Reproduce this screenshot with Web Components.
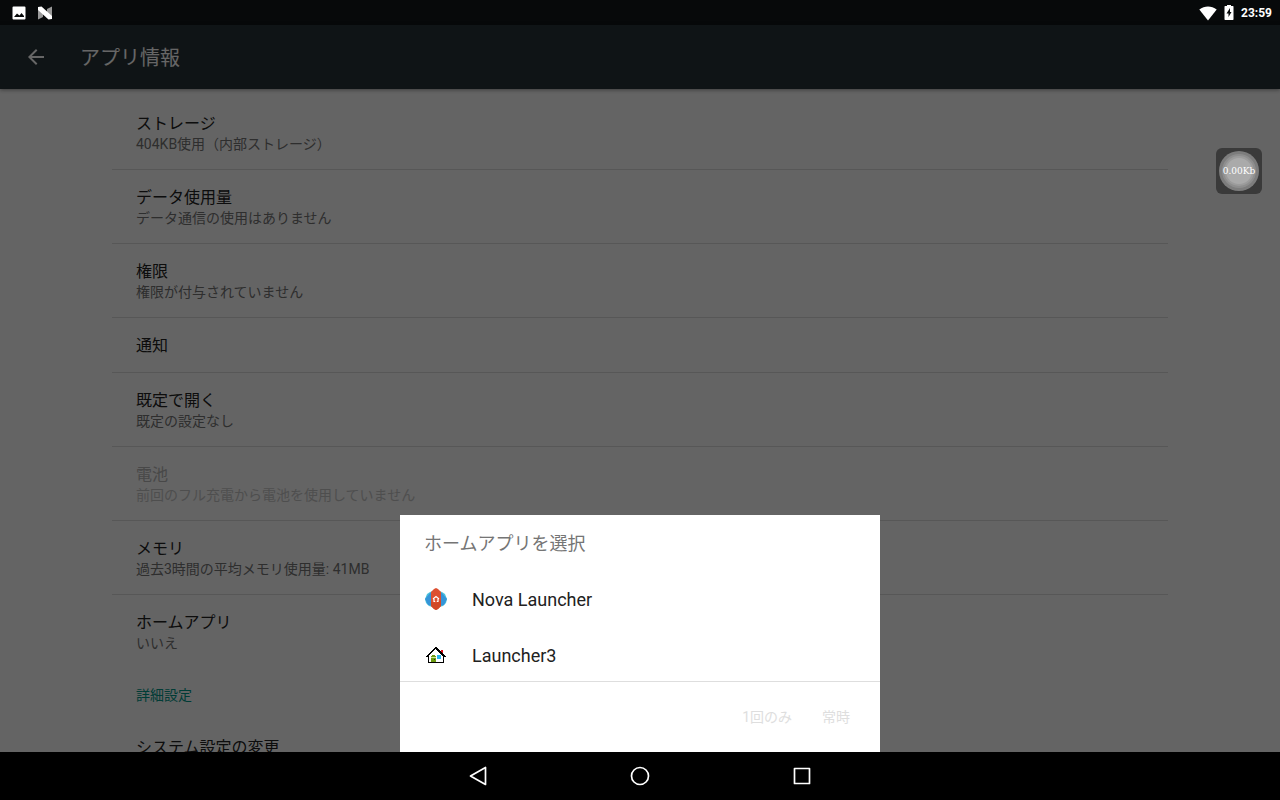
<!DOCTYPE html>
<html lang="ja">
<head>
<meta charset="utf-8">
<meta name="viewport" content="width=device-width, initial-scale=1">
<title>アプリ情報</title>
<style>
   html, body { height: 100%; margin: 0; background: #000; }
   body { font-family: Roboto, "Noto Sans CJK JP", sans-serif; }
</style>
</head>
<body>

<device-screen>
   <status-bar slot="status" time="23:59"></status-bar>

   <app-bar>アプリ情報</app-bar>
   <settings-list>
      <setting-row>ストレージ<span slot="summary">404KB使用（内部ストレージ）</span></setting-row>
      <setting-row>データ使用量<span slot="summary">データ通信の使用はありません</span></setting-row>
      <setting-row>権限<span slot="summary">権限が付与されていません</span></setting-row>
      <setting-row>通知</setting-row>
      <setting-row>既定で開く<span slot="summary">既定の設定なし</span></setting-row>
      <setting-row disabled>電池<span slot="summary">前回のフル充電から電池を使用していません</span></setting-row>
      <setting-row>メモリ<span slot="summary">過去3時間の平均メモリ使用量: 41MB</span></setting-row>
      <setting-row last>ホームアプリ<span slot="summary">いいえ</span></setting-row>
      <setting-category>詳細設定</setting-category>
      <setting-row>システム設定の変更</setting-row>
   </settings-list>

   <chooser-sheet slot="sheet">
      <span slot="title">ホームアプリを選択</span>
      <app-choice>
         <svg slot="icon" width="24" height="24" viewBox="0 0 24 24" aria-hidden="true">
            <path d="M1 11 3 6 6 4 9 3V19L5 18 2 15Z" fill="#4cc3dc"/>
            <path d="M23 11 21 6 18 4 15 3V19L19 18 22 15Z" fill="#4cc3dc"/>
            <path d="M1 11 6 5 9 4V18L4 17Z" fill="#3595d8"/>
            <path d="M23 11 18 5 15 4V18L20 17Z" fill="#3595d8"/>
            <path d="M12 0 14 1 17 4V18L14 21 12 22 10 21 7 18V4L10 1Z" fill="#dd4f30"/>
            <path d="M7 14 12 15 17 12V18L14 21 12 22 10 21 7 18Z" fill="#d14727"/>
            <path d="M9 11 12 8.500 15 11M10 11V13.500H11.200M14 11V13.500H12.800" fill="none" stroke="#fff" stroke-width="1.200"/>
         </svg>
         Nova Launcher
      </app-choice>
      <app-choice>
         <svg slot="icon" width="24" height="24" viewBox="0 0 24 24" shape-rendering="crispEdges" aria-hidden="true">
            <path d="M17 6H19V10L17 8Z" fill="#e00d16"/>
            <path d="M12 5 4 13V19H20V13Z" fill="#fff"/>
            <path d="M2 12H3V11H4V10H5V9H6V8H7V7H8V6H9V5H10V4H11V3H13V4H14V5H15V6H16V7H17V8H18V9H19V10H20V11H21V12H22V13H20V19H4V13H2ZM5 12V18H19V12H18V11H17V10H16V9H15V8H14V7H13V6H12V5H11V6H10V7H9V8H8V9H7V10H6V11H5Z" fill="#000" fill-rule="evenodd"/>
            <path d="M7 12H8V11H11V12H12V18H7Z" fill="#6d9c12"/>
            <path d="M7 13H12V14H7Z" fill="#d3e69d"/>
            <path d="M10 15H11V16H10Z" fill="#27430a"/>
            <path d="M13 11H17V15H13Z" fill="#28b6ee"/>
         </svg>
         Launcher3
      </app-choice>
      <sheet-button slot="actions">1回のみ</sheet-button>
      <sheet-button slot="actions">常時</sheet-button>
   </chooser-sheet>

   <speed-bubble slot="float">0.00Kb</speed-bubble>
   <nav-bar slot="nav"></nav-bar>
</device-screen>

<script>
// registers an element whose shadow root is filled from a markup function
function define( selector, render ) {
   customElements.define( selector, class extends HTMLElement {
      constructor() { super();
         const templateEl = document.createElement( 'template' );
         templateEl.innerHTML = render( this );
         this.attachShadow( { mode: 'open' } ).appendChild( templateEl.content.cloneNode( true ) );
      }
   });
}

// status on top, navigation at the bottom, the app and its dimming layer between
define( 'device-screen', () => `
   <style>
      :host { display: flex; flex-direction: column; height: 100vh; position: relative; overflow: hidden; }
      main { flex: 1; min-height: 0; position: relative; display: flex; flex-direction: column; background: #fafafa; }
      .scrim { position: absolute; inset: 0; background: rgba( 0, 0, 0, .6 ); display: flex; align-items: flex-end; justify-content: center; }
   </style>
   <slot name="status"></slot>
   <main>
      <slot></slot>
      <div class="scrim"><slot name="sheet"></slot></div>
   </main>
   <slot name="nav"></slot>
   <slot name="float"></slot>
` );

define( 'status-bar', host => `
   <style>
      :host { display: flex; flex: none; align-items: center; justify-content: space-between; height: 25px; padding: 0 8px 0 12px; background: #07090a; color: #fff; }
      div { display: flex; align-items: center; }
      .left { gap: 12px; }
      .right { gap: 4px; }
      time { font-size: 12px; line-height: 16px; font-weight: 700; }
      svg { display: block; }
   </style>
   <div class="left">
      <svg width="14" height="14" viewBox="0 0 14 14" aria-hidden="true">
         <path fill="#fff" fill-rule="evenodd" d="M1.500 .500H12.500Q13.500 .500 13.500 1.500V12.500Q13.500 13.500 12.500 13.500H1.500Q.500 13.500 .500 12.500V1.500Q.500 .500 1.500 .500ZM2 11H12V10L9.500 7 7.500 9.500 5 7.500Z"/>
      </svg>
      <svg width="14" height="14" viewBox="0 0 14 14" aria-hidden="true">
         <path fill="#999" d="M0 1 5 5V11L0 13.500ZM9 3 14 .500V13L9 9Z"/>
         <path fill="#fff" d="M0 1 3.500 .500 14 10V13L10.500 13.500 0 4Z"/>
      </svg>
   </div>
   <div class="right">
      <svg width="18" height="16" viewBox="0 0 18 16" aria-hidden="true">
         <path fill="#fff" d="M9 15.500 .300 4.500C5.500 .500 12.500 .500 17.700 4.500Z"/>
      </svg>
      <svg width="16" height="16" viewBox="0 0 16 16" aria-hidden="true">
         <path fill="#fff" fill-rule="evenodd" d="M6 0H10V1H12Q12.500 1 12.500 2V14Q12.500 15 12 15H4Q3.500 15 3.500 14V2Q3.500 1 4 1H6ZM9 3 5.500 8.500H7.500V12L10.500 7H9Z"/>
      </svg>
      <time>${ host.getAttribute( 'time' ) || '' }</time>
   </div>
` );

define( 'app-bar', () => `
   <style>
      :host { display: flex; flex: none; align-items: center; gap: 32px; height: 64px; padding: 0 24px; background: #263238; color: #fff; box-shadow: 0 1px 4px rgba( 0, 0, 0, .4 ); position: relative; }
      button { border: 0; padding: 0; width: 24px; height: 24px; background: none; color: inherit; }
      svg { display: block; }
      h1 { margin: 0; padding-top: 2px; font-size: 20px; line-height: 28px; font-weight: 400; }
   </style>
   <button aria-label="戻る">
      <svg width="24" height="24" viewBox="0 0 24 24"><path fill="currentColor" d="M20 11H7.830l5.590-5.590L12 4l-8 8 8 8 1.410-1.410L7.830 13H20v-2z"/></svg>
   </button>
   <h1><slot></slot></h1>
` );

define( 'settings-list', () => `
   <style>
      :host { display: block; flex: 1; min-height: 0; overflow: hidden; padding: 7px 112px 0; }
   </style>
   <slot></slot>
` );

define( 'setting-row', host => `
   <style>
      :host { display: block; border-bottom: 1px solid #dadada; color: #212121; }
      :host([last]) { border-bottom-color: transparent; }
      :host([disabled]) { color: #b4b4b4; --summary: #c4c4c4; }
      button { display: block; width: 100%; border: 0; padding: 17px 24px 15px; background: none; color: inherit; font-family: inherit; font-size: 16px; line-height: 22px; text-align: left; }
      .summary { display: block; font-size: 14px; line-height: 19px; color: var( --summary, #737373 ); }
   </style>
   <button ${ host.hasAttribute( 'disabled' ) ? 'disabled' : '' }><slot></slot><span class="summary"><slot name="summary"></slot></span></button>
` );

define( 'setting-category', () => `
   <style>
      :host { display: block; padding: 16px 24px 15px; color: #009688; font-size: 14px; line-height: 20px; }
   </style>
   <slot></slot>
` );

define( 'chooser-sheet', () => `
   <style>
      :host { display: block; width: 480px; max-width: 100%; background: #fff; }
      h2 { margin: 0; padding: 17px 24px 16px; font-size: 18px; line-height: 24px; font-weight: 400; color: #757575; }
      .choices { height: 109px; overflow: hidden; border-bottom: 1px solid #dedede; }
      .actions { display: flex; justify-content: flex-end; padding: 11px 15px; }
   </style>
   <section role="dialog" aria-labelledby="heading">
      <h2 id="heading"><slot name="title"></slot></h2>
      <div class="choices"><slot></slot></div>
      <div class="actions"><slot name="actions"></slot></div>
   </section>
` );

define( 'app-choice', () => `
   <style>
      :host { display: block; }
      button { display: flex; align-items: center; gap: 24px; width: 100%; height: 56px; border: 0; padding: 0 24px; background: none; color: #212121; font-family: inherit; font-size: 18px; line-height: 24px; text-align: left; }
      ::slotted(svg) { display: block; }
   </style>
   <button><slot name="icon"></slot><span><slot></slot></span></button>
` );

define( 'sheet-button', () => `
   <style>
      :host { display: block; }
      button { height: 48px; border: 0; padding: 0 15px; background: none; color: #dedede; font-family: inherit; font-size: 14px; line-height: 20px; }
   </style>
   <button disabled><slot></slot></button>
` );

// network speed meter that floats over every app
define( 'speed-bubble', () => `
   <style>
      :host { position: absolute; top: 148px; right: 18px; display: grid; place-items: center; width: 46px; height: 46px; border-radius: 6px; background: #3a3a3a; color: #fff; font-family: "DejaVu Serif", serif; font-size: 9px; line-height: 12px; }
      svg, span { grid-area: 1 / 1; }
   </style>
   <svg width="46" height="46" viewBox="0 0 46 46" aria-hidden="true">
      <circle cx="23" cy="23" r="20" fill="#7d7d7d"/>
      <circle cx="23" cy="23" r="17" fill="#8e8e8e"/>
      <circle cx="23" cy="23" r="15" fill="#9c9c9c"/>
      <circle cx="23" cy="23" r="13" fill="#aaa"/>
   </svg>
   <span><slot></slot></span>
` );

define( 'nav-bar', () => `
   <style>
      :host { display: flex; flex: none; justify-content: center; height: 48px; background: #000; }
      button { display: grid; place-items: center; width: 162px; border: 0; padding: 0; background: none; }
      svg { fill: none; stroke: #fff; stroke-width: 1.700; stroke-linejoin: round; }
   </style>
   <button aria-label="戻る"><svg width="24" height="24" viewBox="0 0 24 24"><path d="M19.500 3.500V20.500L4.500 12Z"/></svg></button>
   <button aria-label="ホーム"><svg width="24" height="24" viewBox="0 0 24 24"><circle cx="12" cy="12" r="8.500"/></svg></button>
   <button aria-label="最近"><svg width="24" height="24" viewBox="0 0 24 24"><path d="M4.500 4.500H19.500V19.500H4.500Z"/></svg></button>
` );
</script>
</body>
</html>
